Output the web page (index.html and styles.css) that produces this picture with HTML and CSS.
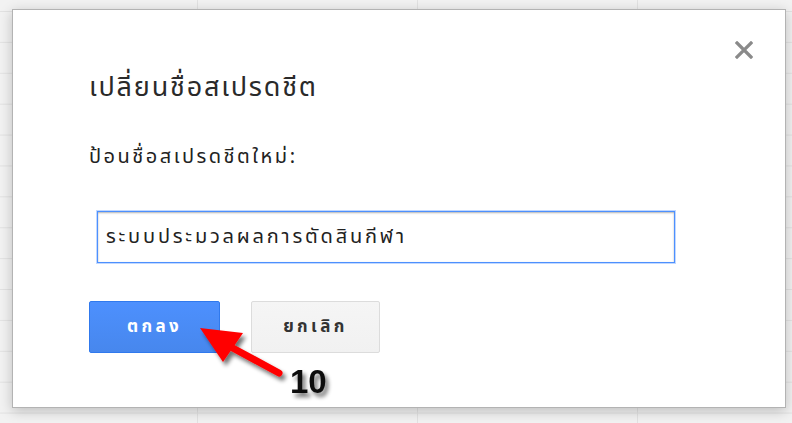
FILE: index.html
```html
<!DOCTYPE html>
<html lang="th">
<head>
<meta charset="utf-8">
<title>เปลี่ยนชื่อสเปรดชีต</title>
<link rel="stylesheet" href="styles.css">
</head>
<body>
<div class="sheet">
  <div class="dialog">
    <button class="close" aria-label="ปิด">
      <svg width="18" height="18" viewBox="0 0 18 18"><path d="M2 2L16 16M16 2L2 16" stroke="#8a8a8a" stroke-width="3.2" stroke-linecap="square"/></svg>
    </button>
    <h1 class="title">เปลี่ยนชื่อสเปรดชีต</h1>
    <label class="label" for="name">ป้อนชื่อสเปรดชีตใหม่:</label>
    <div class="field"><input id="name" class="input" type="text" value="ระบบประมวลผลการตัดสินกีฬา"></div>
    <div class="actions">
      <button class="btn btn-ok">ตกลง</button>
      <button class="btn btn-cancel">ยกเลิก</button>
    </div>
    <svg class="callout" width="160" height="100" viewBox="0 0 160 100">
      <defs>
        <filter id="sh" x="-20%" y="-20%" width="150%" height="150%">
          <feGaussianBlur in="SourceAlpha" stdDeviation="2.2"/>
          <feOffset dx="3" dy="4" result="b"/>
          <feComponentTransfer><feFuncA type="linear" slope="0.55"/></feComponentTransfer>
          <feMerge><feMergeNode/><feMergeNode in="SourceGraphic"/></feMerge>
        </filter>
      </defs>
      <g filter="url(#sh)">
        <path d="M90 67L40 40" stroke="#f00" stroke-width="7" stroke-linecap="round"/>
        <path d="M11 22L54 27L34 56Z" fill="#f00"/>
      </g>
      <text x="101" y="87" class="num" filter="url(#sh)">10</text>
    </svg>
  </div>
</div>
</body>
</html>
```
FILE: styles.css
```css
html, body {
  margin: 0;
  height: 100%;
}

body {
  font-family: Tahoma, "Noto Sans Thai", "Noto Sans", "DejaVu Sans", sans-serif;
  color: #222;
  background-color: #f2f2f2;
  background-image:
    linear-gradient(to right, #e2e2e2 1px, transparent 1px),
    linear-gradient(to bottom, #e2e2e2 1px, transparent 1px);
  background-size: 220px 100%, 100% 30.9px;
  background-position: -23px 0, 0 11px;
}

.sheet {
  padding: 9px 6px 15px 12px;
}

.dialog {
  position: relative;
  box-sizing: border-box;
  height: 399px;
  background: #fff;
  border: 1px solid #b3b3b3;
  box-shadow: 0 3px 12px rgba(0, 0, 0, 0.22);
  padding: 62px 40px 0 76px;
}

.close {
  position: absolute;
  top: 29px;
  right: 30px;
  width: 22px;
  height: 22px;
  padding: 2px;
  border: 0;
  background: none;
}

.title {
  margin: 0;
  font-size: 27px;
  font-weight: normal;
  letter-spacing: 1.8px;
  line-height: 32px;
  color: #2a2a2a;
}

.label {
  display: block;
  margin-top: 42px;
  font-size: 20px;
  letter-spacing: 2.5px;
  line-height: 22px;
  color: #222;
}

.field {
  margin: 43px 0 0 8px;
}

.input {
  box-sizing: border-box;
  width: 578px;
  height: 52px;
  padding: 0 8px;
  border: 1px solid #4d90fe;
  box-shadow: inset 0 1px 2px rgba(0, 0, 0, 0.3), 0 0 0 1px rgba(77, 144, 254, 0.35);
  font-family: inherit;
  font-size: 20px;
  letter-spacing: 2.8px;
  color: #222;
  outline: none;
}

.actions {
  display: flex;
  gap: 31px;
  margin-top: 38px;
}

.btn {
  box-sizing: border-box;
  height: 52px;
  border-radius: 2px;
  font-family: inherit;
  font-size: 17px;
  font-weight: bold;
  letter-spacing: 3.4px;
}

.btn-ok {
  width: 131px;
  color: #fff;
  border: 1px solid #3079ed;
  background: linear-gradient(#4d90fe, #4787ed);
}

.btn-cancel {
  width: 129px;
  color: #333;
  border: 1px solid #dcdcdc;
  background: linear-gradient(#f5f5f5, #f1f1f1);
}

.callout {
  position: absolute;
  left: 176px;
  top: 296px;
  overflow: visible;
}

.num {
  font-family: "Liberation Sans", Arial, sans-serif;
  font-weight: bold;
  font-size: 33px;
  fill: #111;
}
```
